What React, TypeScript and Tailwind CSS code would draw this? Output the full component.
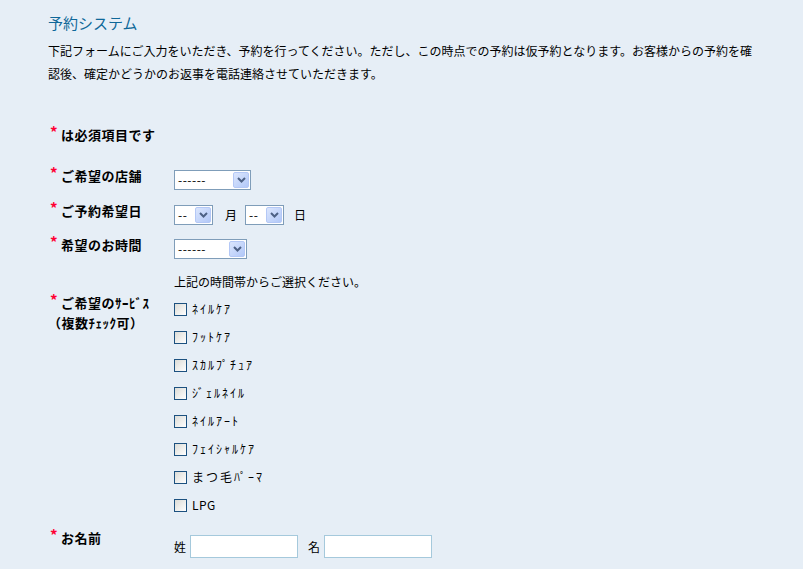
import React from "react";

const font = { fontFamily: '"Noto Sans CJK JP", "Noto Sans", sans-serif' };

function Select({ width, text }: { width: number; text: string }) {
  return (
    <div
      className="relative h-[20px] border border-[#7f9db9] bg-white flex items-center"
      style={{ width }}
    >
      <span className="pl-[3px] text-[12px] leading-none text-black tracking-[0.5px]">{text}</span>
      <div className="absolute right-[1px] top-[1px] w-[16px] h-[16px] rounded-[2px] border border-[#b4c8f6] bg-gradient-to-br from-[#dbe6fd] to-[#b2c8f8] flex items-center justify-center">
        <svg width="9" height="6" viewBox="0 0 9 6">
          <path d="M1 1 L4.5 4.5 L8 1" stroke="#4d6185" strokeWidth="2" fill="none" />
        </svg>
      </div>
    </div>
  );
}

function Star() {
  return (
    <span className="text-[#ff0033] text-[15px] font-bold leading-none self-start mt-[-1px] mr-[4px] w-[7px]">
      *
    </span>
  );
}

function Label({ children, className = "" }: { children: React.ReactNode; className?: string }) {
  return (
    <div className={"w-[126px] shrink-0 flex items-start pl-[2px] " + className}>
      <Star />
      <div className="font-bold text-[13px] leading-[20px] tracking-[0.5px] text-black">{children}</div>
    </div>
  );
}

function Check({ label, wide = true }: { label: string; wide?: boolean }) {
  return (
    <div className="h-[28px] flex items-center">
      <div className="w-[13px] h-[13px] border border-[#1c5180] bg-gradient-to-br from-[#dcdcd7] to-white" />
      <span className={"ml-[5px] text-[12px] leading-none text-black " + (wide ? "tracking-[2px]" : "tracking-[0.5px]")}>
        {label}
      </span>
    </div>
  );
}

export default function App() {
  const services = ["ﾈｲﾙｹｱ", "ﾌｯﾄｹｱ", "ｽｶﾙﾌﾟﾁｭｱ", "ｼﾞｪﾙﾈｲﾙ", "ﾈｲﾙｱｰﾄ", "ﾌｪｲｼｬﾙｹｱ", "まつ毛ﾊﾟｰﾏ"];
  return (
    <div className="min-h-screen bg-[#e6eef6] pl-[48px] pt-[12px] text-black" style={font}>
      <h1 className="text-[15px] leading-[22px] text-[#0f6899] font-normal">予約システム</h1>
      <p className="mt-[5px] text-[12px] leading-[23px]">
        下記フォームにご入力をいただき、予約を行ってください。ただし、この時点での予約は仮予約となります。お客様からの予約を確
        <br />
        認後、確定かどうかのお返事を電話連絡させていただきます。
      </p>

      <div className="mt-[40px] flex items-start pl-[2px]">
        <Star />
        <span className="font-bold text-[13px] leading-[20px] tracking-[0.5px]">は必須項目です</span>
      </div>

      <div className="mt-[25px] flex items-start">
        <Label className="mt-[-4px]">ご希望の店舗</Label>
        <Select width={77} text="------" />
      </div>

      <div className="mt-[15px] flex items-start">
        <Label className="mt-[-4px]">ご予約希望日</Label>
        <div className="flex items-center">
          <Select width={39} text="--" />
          <span className="ml-[12px] mr-[8px] text-[12px]">月</span>
          <Select width={39} text="--" />
          <span className="ml-[10px] text-[12px]">日</span>
        </div>
      </div>

      <div className="mt-[14px] flex items-start">
        <Label className="mt-[-4px]">希望のお時間</Label>
        <div className="flex flex-col">
          <Select width={73} text="------" />
          <div className="mt-[14px] text-[12px] leading-[18px]">上記の時間帯からご選択ください。</div>
        </div>
      </div>

      <div className="mt-[2px] flex items-start">
        <div className="w-[126px] shrink-0 flex flex-col">
          <div className="flex items-start pl-[2px]">
            <Star />
            <div className="font-bold text-[13px] leading-[20px] tracking-[0.5px]">ご希望のｻｰﾋﾞｽ</div>
          </div>
          <div className="font-bold text-[13px] leading-[20px] tracking-[0.5px]">（複数ﾁｪｯｸ可）</div>
        </div>
        <div className="flex flex-col pt-[2px]">
          {services.map((s) => (
            <Check key={s} label={s} />
          ))}
          <Check label="LPG" wide={false} />
        </div>
      </div>

      <div className="mt-[12px] flex items-start">
        <Label className="mt-[-3px]">お名前</Label>
        <div className="flex items-center mt-[4px]">
          <span className="text-[12px] mr-[4px]">姓</span>
          <div className="w-[108px] h-[23px] border border-[#a5c9dc] bg-white" />
          <span className="text-[12px] ml-[10px] mr-[4px]">名</span>
          <div className="w-[108px] h-[23px] border border-[#a5c9dc] bg-white" />
        </div>
      </div>
    </div>
  );
}
